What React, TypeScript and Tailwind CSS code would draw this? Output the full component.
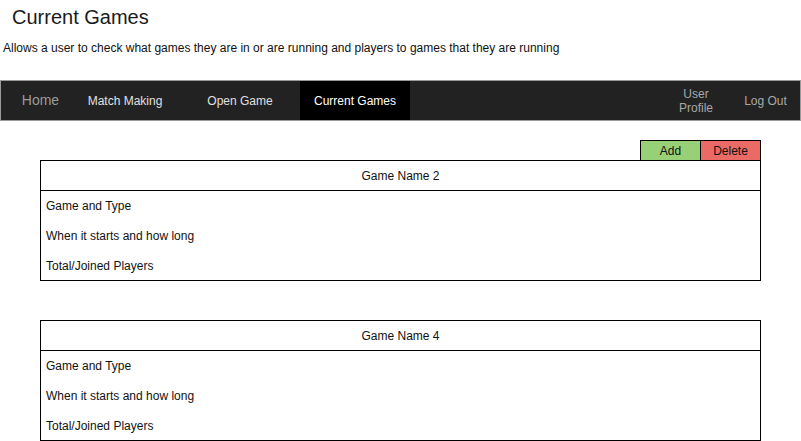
import React from "react";

const games = ["Game Name 2", "Game Name 4"];

function GameCard({ name, className }: { name: string; className?: string }) {
  return (
    <div className={`ml-[40px] w-[721px] border border-black bg-white ${className ?? ""}`}>
      <div className="h-[30px] border-b border-black flex items-center justify-center text-[12px] text-[#111]">
        {name}
      </div>
      <div className="pl-[5px] text-[12px] text-[#111]">
        <div className="h-[30px] flex items-center">Game and Type</div>
        <div className="h-[30px] flex items-center">When it starts and how long</div>
        <div className="h-[29px] flex items-center">Total/Joined Players</div>
      </div>
    </div>
  );
}

export default function App() {
  return (
    <div className="w-[801px] h-[441px] overflow-hidden bg-white font-['Liberation_Sans',Arial,sans-serif]">
      {/* Header */}
      <h1 className="pt-[5px] pl-[12px] text-[20px] leading-[24px] text-[#1a1a1a]">Current Games</h1>
      <p className="mt-[11px] pl-[3px] text-[12px] leading-[16px] text-[#111]">
        Allows a user to check what games they are in or are running and players to games that they are running
      </p>

      {/* Nav */}
      <nav className="mt-[24px] h-[41px] border border-[#9a9a9a] bg-[#222222] flex items-stretch text-[12px]">
        <div className="w-[79px] flex items-center justify-center text-[14px] text-[#9b9b9b]">Home</div>
        <div className="w-[90px] flex items-center justify-center text-[#e0e0e0]">Match Making</div>
        <div className="w-[130px] pl-[10px] flex items-center justify-center text-[#e0e0e0]">Open Game</div>
        <div className="w-[110px] bg-black flex items-center justify-center text-white">Current Games</div>
        <div className="ml-auto w-[70px] flex flex-col items-center justify-center leading-[14px] text-[#a8a8a8]">
          <span>User</span>
          <span>Profile</span>
        </div>
        <div className="w-[69px] flex items-center justify-center text-[#a8a8a8]">Log Out</div>
      </nav>

      {/* Actions */}
      <div className="mt-[19px] ml-[640px] flex h-[20px] text-[12px] text-[#111]">
        <button className="w-[60px] border-l border-t border-black bg-[#97d077] flex items-center justify-center">
          Add
        </button>
        <button className="w-[61px] border-l border-r border-t border-black bg-[#ea6b66] flex items-center justify-center">
          Delete
        </button>
      </div>

      {games.map((g, i) => (
        <GameCard key={g} name={g} className={i > 0 ? "mt-[39px]" : ""} />
      ))}
    </div>
  );
}
